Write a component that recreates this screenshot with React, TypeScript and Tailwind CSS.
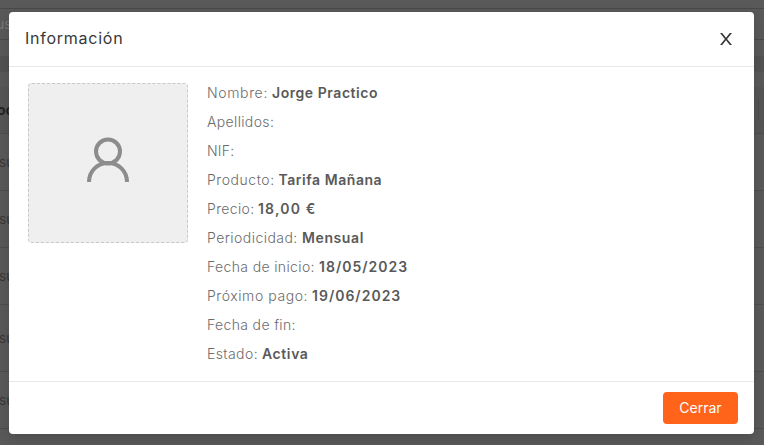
import clsx from "clsx";

const details = [
	{ label: "Nombre:", value: "Jorge Practico", labelStyle: "w-[61px] tracking-[0.65px]", valueStyle: "tracking-[0.55px]" },
	{ label: "Apellidos:", value: "", labelStyle: "w-[67px] tracking-[0.35px]", valueStyle: "" },
	{ label: "NIF:", value: "", labelStyle: "w-[27px] tracking-[0.2px]", valueStyle: "" },
	{ label: "Producto:", value: "Tarifa Mañana", labelStyle: "w-[67.5px] tracking-[0.55px]", valueStyle: "tracking-[0.55px]" },
	{ label: "Precio:", value: "18,00 €", labelStyle: "w-[47px] tracking-[0.35px]", valueStyle: "tracking-[1.2px]" },
	{ label: "Periodicidad:", value: "Mensual", labelStyle: "w-[91px] tracking-[0.45px]", valueStyle: "tracking-[0.6px]" },
	{ label: "Fecha de inicio:", value: "18/05/2023", labelStyle: "w-[108px] tracking-[0.36px]", valueStyle: "tracking-[1px]" },
	{ label: "Próximo pago:", value: "19/06/2023", labelStyle: "w-[101px] tracking-[0.57px]", valueStyle: "tracking-[1px]" },
	{ label: "Fecha de fin:", value: "", labelStyle: "w-[89px] tracking-[0.35px]", valueStyle: "" },
	{ label: "Estado:", value: "Activa", labelStyle: "w-[51px] tracking-[0.4px]", valueStyle: "tracking-[0.6px]" },
];

const rows = ["h-[57px]", "h-[57px]", "h-[57px]", "h-[67px]", "h-[57px]"];

function CloseIcon() {
	return (
		<svg width="12" height="12" viewBox="0 0 12 12" fill="currentColor" aria-hidden="true">
			<path d="M0 0h2.2L6 4.7 9.8 0H12L7.1 6 12 12H9.8L6 7.3 2.2 12H0L4.9 6z" />
		</svg>
	);
}

function UserIcon() {
	return (
		<svg width="42" height="46" viewBox="0 0 42 46" fill="none" stroke="#8c8c8c" strokeWidth="4" aria-hidden="true">
			<circle cx="21" cy="14.5" r="12" />
			<path d="M2 45C2 34 10.5 26 21 26S40 34 40 45" />
		</svg>
	);
}

/* Dimmed list page that sits behind the dialog */
function ListPage() {
	return (
		<div className="flex h-full flex-col overflow-hidden text-sm text-[#303030]" aria-hidden="true">
			<div className="h-[9px] shrink-0 border-b border-[#494949]" />
			<div className="flex h-[31px] shrink-0 items-center border-b border-[#494949] text-[#777]">
				<span className="-ml-1">us</span>
			</div>
			<div className="h-4 shrink-0" />
			<div className="h-4 shrink-0 bg-[#525252]" />
			<div className="h-[15px] shrink-0" />
			<div className="flex h-[47px] shrink-0 items-center justify-between border-b border-[#4d4d4d] bg-[#555] pr-[5px] font-bold text-[#242424]">
				<span className="-ml-[3px]">oc</span>
				<span className="h-[22px] w-px bg-[#4d4d4d]" />
			</div>
			{rows.map((height, i) => (
				<div key={i} className={clsx("flex shrink-0 items-center border-b border-[#4d4d4d] font-light", height)}>
					<span className="-ml-px">su</span>
				</div>
			))}
		</div>
	);
}

export default function App() {
	return (
		<main className="relative h-[445px] w-[764px] overflow-hidden bg-[#595959] font-['Inter',sans-serif]">
			<ListPage />

			<section
				role="dialog"
				aria-labelledby="dialog-title"
				className="absolute top-3 left-[9px] flex h-[422px] w-[745px] flex-col rounded-[4px] bg-white shadow-[0_4px_12px_rgba(0,0,0,0.15)]"
			>
				<header className="flex h-[55px] shrink-0 items-center justify-between border-b border-[#e8e8e8] pr-[22px] pb-0.5 pl-4 text-[#383838]">
					<h2 id="dialog-title" className="text-base tracking-[0.75px]">
						Información
					</h2>
					<button type="button" aria-label="Cerrar diálogo" className="mt-0.5">
						<CloseIcon />
					</button>
				</header>

				<div className="flex flex-1 gap-[19px] pt-4 pl-[19px]">
					<div className="flex size-40 items-center justify-center rounded-[4px] border border-dashed border-[#c8c8c8] bg-[#efefef]">
						<div className="-mt-1.5">
							<UserIcon />
						</div>
					</div>

					<dl className="-mt-[5px] text-[14px] text-[#595959]">
						{details.map((item) => (
							<div key={item.label} className="flex h-[29px] items-center whitespace-nowrap">
								<dt className={clsx("mr-1 font-light text-[#6c6c6c]", item.labelStyle)}>{item.label}</dt>
								<dd className={clsx("font-semibold", item.valueStyle)}>{item.value}</dd>
							</div>
						))}
					</dl>
				</div>

				<footer className="flex h-[53px] shrink-0 items-center justify-end border-t border-[#e8e8e8] pr-4">
					<button type="button" className="h-8 w-[75px] rounded-[4px] bg-[#ff641a] text-sm text-white">
						Cerrar
					</button>
				</footer>
			</section>
		</main>
	);
}
